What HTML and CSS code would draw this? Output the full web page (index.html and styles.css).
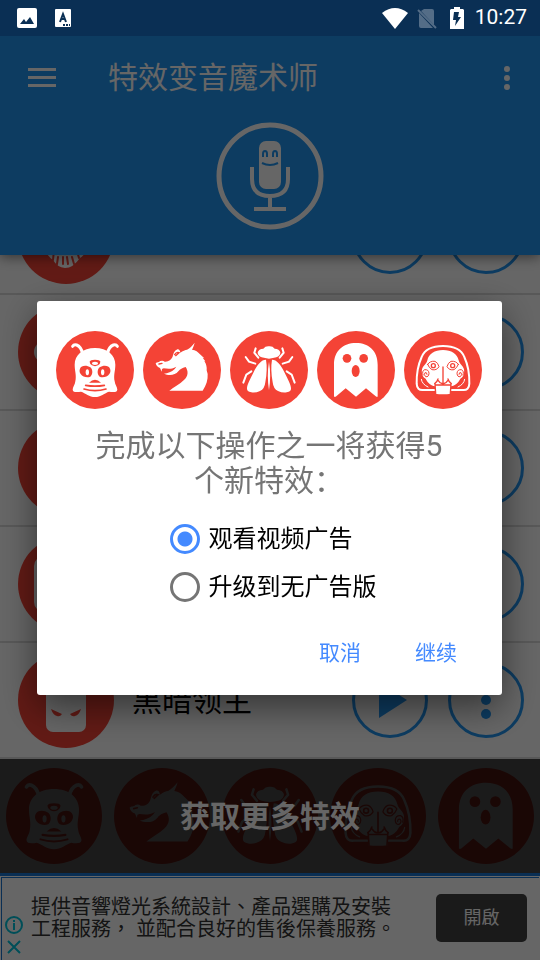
FILE: index.html
```html
<!doctype html>
<html lang="zh-CN">
<head>
  <meta charset="utf-8">
  <meta name="viewport" content="width=device-width, initial-scale=1">
  <title>特效变音魔术师</title>
  <link rel="stylesheet" href="styles.css">
</head>
<body>
  <!-- shared effect icons -->
  <svg class="sprite" aria-hidden="true">
    <symbol id="alien" viewBox="0 0 234 234">
      <circle class="r" cx="117" cy="117" r="117"/>
      <path class="ws" stroke-width="9" d="M50 46Q54 39 62 42Q75 47 80 68M184 46Q180 39 172 42Q159 47 154 68"/>
      <path class="w" d="M117 51C80 51 56 72 56 101C56 120 62 132 58 151C57 162 50 168 50 176C51 185 64 184 75 182C88 186 100 198 117 198C134 198 146 186 159 182C170 184 183 185 184 176C184 168 177 162 176 151C172 132 178 120 178 101C178 72 154 51 117 51Z"/>
      <path class="r" d="M101 92Q102 86 117 86Q132 86 133 92Q133 99 126 103Q117 108 108 103Q101 99 101 92Z"/>
      <ellipse class="w" cx="117" cy="97" rx="9" ry="5"/>
      <path class="r" d="M72 113C76 102 93 102 103 109C112 117 110 132 103 137C94 141 80 138 74 129C70 123 70 118 72 113ZM162 113C158 102 141 102 131 109C122 117 124 132 131 137C140 141 154 138 160 129C164 123 164 118 162 113Z"/>
      <ellipse class="w" cx="94" cy="124" rx="5" ry="9"/>
      <ellipse class="w" cx="140" cy="124" rx="5" ry="9"/>
      <path class="r" d="M99 155Q117 138 135 155Z"/>
      <path class="rs" stroke-width="5" d="M89 163Q117 168 145 163M84 174Q117 184 150 174"/>
    </symbol>
    <symbol id="dragon" viewBox="0 0 234 234">
      <circle class="r" cx="117" cy="117" r="117"/>
      <path class="w" d="M38 97C42 92 48 95 52 90Q60 87 65 92C77 93 85 86 88 79C91 71 92 60 101 56C107 53 111 57 112 65C119 60 127 56 132 56C141 51 147 45 155 35C153 43 151 48 147 56C158 57 165 63 171 70L184 82L179 80L187 91L184 91C190 99 192 109 191 118L194 129C195 147 190 162 179 179H79C93 168 111 159 122 148C137 135 136 120 128 108C117 111 112 114 106 121C96 134 76 134 63 128C74 127 86 123 95 114L100 107C84 116 73 113 62 112L57 114L56 122L51 111Q41 108 38 97Z"/>
      <path class="rs" stroke-width="4" d="M95 71Q100 62 108 65L98 74M48 99L57 97"/>
    </symbol>
    <symbol id="fly" viewBox="0 0 234 234">
      <circle class="r" cx="117" cy="117" r="117"/>
      <path class="w" d="M117 46Q128 45 134 53Q148 54 151 64Q151 75 139 79Q129 82 117 83Q105 82 95 79Q83 75 83 64Q86 54 100 53Q106 45 117 46Z"/>
      <path class="ws" stroke-width="6" d="M77 52L73 65L85 80M157 52L161 65L149 80M47 78L57 92L76 98M187 78L177 92L158 98M64 121L49 131L40 155M170 121L185 131L194 155"/>
      <path class="w" d="M108 86C94 86 82 100 70 125C61 143 51 161 51 172Q50 182 64 184Q77 186 90 180Q104 174 106 154Q113 115 108 86ZM126 86C140 86 152 100 164 125C173 143 183 161 183 172Q184 182 170 184Q157 186 144 180Q130 174 128 154Q121 115 126 86ZM117 92Q124 133 117 178Q110 133 117 92Z"/>
    </symbol>
    <symbol id="ghost" viewBox="0 0 234 234">
      <circle class="r" cx="117" cy="117" r="117"/>
      <path class="w" d="M51 101C51 60 78 36 117 36S182 60 182 101V197H178L147 172L117 197L86 172L56 197H51Z"/>
      <circle class="r" cx="90" cy="82" r="13"/>
      <circle class="r" cx="140" cy="82" r="13"/>
      <ellipse class="r" cx="116" cy="120" rx="12" ry="18"/>
    </symbol>
    <symbol id="puppet" viewBox="0 0 234 234">
      <circle class="r" cx="117" cy="117" r="117"/>
      <path class="ws" stroke-width="6" d="M91 177H58Q39 179 38 158Q37 113 53 78Q66 45 117 45Q168 45 181 78Q197 113 196 158Q195 179 176 177H143"/>
      <path class="w" d="M117 57C142 57 160 68 164 88C166 99 177 104 180 115C182 128 178 139 169 143C161 158 154 163 141 166L141 188Q117 191 93 188L93 166C80 163 73 158 65 143C56 139 52 128 54 115C57 104 68 99 70 88C74 68 92 57 117 57Z"/>
      <path class="ws" stroke-width="3" d="M52 145Q54 160 72 168M182 145Q180 160 162 168"/>
      <path class="rs" stroke-width="3" d="M71 100Q78 89 93 91Q102 95 105 107Q98 119 84 116Q75 111 71 100ZM163 100Q156 89 141 91Q132 95 129 107Q136 119 150 116Q159 111 163 100Z"/>
      <path class="rs" stroke-width="4" d="M117 108V156M92 158Q99 154 102 144M142 158Q135 154 132 144M103 149Q110 160 117 157Q124 160 131 149M93 158L95 188M141 158L139 188M96 162H138"/>
      <circle class="rs" stroke-width="4" cx="88" cy="104" r="6"/>
      <circle class="rs" stroke-width="4" cx="146" cy="104" r="6"/>
      <path class="rs" stroke-width="3" d="M57 132Q53 120 62 116Q74 115 75 127Q74 139 65 137Q58 131 63 125Q69 123 69 130M177 132Q181 120 172 116Q160 115 159 127Q160 139 169 137Q176 131 171 125Q165 123 165 130"/>
    </symbol>
    <symbol id="teeth" viewBox="0 0 96 96">
      <circle class="r" cx="48" cy="48" r="48"/>
      <path class="w" d="M24 40H72Q73 63 62 70Q55 80 47 80Q39 79 35 72Q23 64 24 40Z"/>
      <path class="rs" stroke-width="2" d="M36 62L35 72M40 69L39 76M45 69V76M49 69L50 76M54 69L56 76M59 63L61 70"/>
    </symbol>
    <symbol id="mask" viewBox="0 0 96 96">
      <circle class="r" cx="48" cy="48" r="48"/>
      <circle class="w" cx="27" cy="48" r="11"/>
      <circle class="w" cx="69" cy="48" r="11"/>
    </symbol>
    <symbol id="plain" viewBox="0 0 96 96">
      <circle class="r" cx="48" cy="48" r="48"/>
      <rect class="w" x="30" y="24" width="36" height="48" rx="8"/>
    </symbol>
    <symbol id="robot" viewBox="0 0 96 96">
      <circle class="r" cx="48" cy="48" r="48"/>
      <rect class="w" x="16" y="20" width="64" height="56" rx="10"/>
    </symbol>
    <symbol id="lord" viewBox="0 0 96 96">
      <circle class="r" cx="48" cy="48" r="48"/>
      <rect class="w" x="28" y="18" width="40" height="62" rx="7"/>
      <path class="r" d="M33 57L44 62Q42 65 39 64Q35 63 33 57ZM63 57L52 62Q54 65 57 64Q61 63 63 57Z"/>
    </symbol>
    <symbol id="play" viewBox="0 0 28 36"><path fill="#2196f3" d="M0 0L28 18L0 36Z"/></symbol>
    <symbol id="dots" viewBox="0 0 10 38">
      <g fill="#2196f3"><circle cx="5" cy="5" r="5"/><circle cx="5" cy="19" r="5"/><circle cx="5" cy="33" r="5"/></g>
    </symbol>
  </svg>

  <div class="status-bar">
    <svg width="20" height="20" viewBox="0 0 20 20"><rect width="20" height="20" rx="2" fill="#fff"/><path fill="#0a2f54" d="M3 16L7 11L9 14L13 9L17 16Z"/></svg>
    <svg class="status-lang" width="16" height="18" viewBox="0 0 16 18"><rect width="16" height="18" rx="1" fill="#fff"/><path fill="none" stroke="#0a2f54" stroke-width="2" d="M5 13L8 5L11 13M6 10H10"/><path fill="#0a2f54" d="M8 15H10V17H8ZM11 15H13V17H11ZM14 15H15V17H14Z"/></svg>
    <span class="spacer"></span>
    <svg width="26" height="21" viewBox="0 0 26 21"><path fill="#fff" d="M0 5Q13-5 26 5L13 21Z"/></svg>
    <svg class="status-sim" width="20" height="21" viewBox="0 0 20 21"><path fill="#546d87" d="M7 1H15Q17 1 17 3V17L4 3ZM2 5L16 20H4Q2 20 2 18Z"/><path stroke="#546d87" stroke-width="2" d="M1 2L19 20"/></svg>
    <svg class="status-battery" width="14" height="22" viewBox="0 0 14 22"><path fill="#fff" d="M4 0H10V2H13L14 3V22H0V3L1 2H4Z"/><path fill="#0a2f54" d="M4 5H9L8 10H11L5 19L6 13H3Z"/></svg>
    <span class="clock">10:27</span>
  </div>

  <header class="app-header">
    <div class="toolbar">
      <button class="icon-btn" aria-label="菜单"><svg width="28" height="19" viewBox="0 0 28 19"><path fill="#fff" d="M0 0H28V3H0ZM0 8H28V11H0ZM0 16H28V19H0Z"/></svg></button>
      <h1>特效变音魔术师</h1>
      <button class="icon-btn" aria-label="更多"><svg width="6" height="24" viewBox="0 0 6 24"><g fill="#fff"><circle cx="3" cy="3" r="3"/><circle cx="3" cy="12" r="3"/><circle cx="3" cy="21" r="3"/></g></svg></button>
    </div>
    <svg class="logo" width="108" height="108" viewBox="0 0 108 108">
      <circle cx="54" cy="54" r="51" fill="none" stroke="#fff" stroke-width="5"/>
      <rect x="43" y="19" width="22" height="48" rx="7" fill="#fff"/>
      <path fill="none" stroke="#2196f3" stroke-width="2" d="M47 35V32Q47 29 49 29T51 32V35M57 35V32Q57 29 59 29T61 32V35M46 41Q54 45 62 41"/>
      <path fill="none" stroke="#fff" stroke-width="4" d="M36 45V57Q36 74 54 74T72 57V45M54 74V87M38 87H70"/>
    </svg>
  </header>

  <main class="effects">
    <div class="effect">
      <svg class="avatar"><use href="#teeth"/></svg><span class="name"></span>
      <button class="round" aria-label="播放"><svg width="28" height="36"><use href="#play"/></svg></button>
      <button class="round" aria-label="选项"><svg width="10" height="38"><use href="#dots"/></svg></button>
    </div>
    <div class="effect">
      <svg class="avatar"><use href="#mask"/></svg><span class="name"></span>
      <button class="round" aria-label="播放"><svg width="28" height="36"><use href="#play"/></svg></button>
      <button class="round" aria-label="选项"><svg width="10" height="38"><use href="#dots"/></svg></button>
    </div>
    <div class="effect">
      <svg class="avatar"><use href="#plain"/></svg><span class="name"></span>
      <button class="round" aria-label="播放"><svg width="28" height="36"><use href="#play"/></svg></button>
      <button class="round" aria-label="选项"><svg width="10" height="38"><use href="#dots"/></svg></button>
    </div>
    <div class="effect">
      <svg class="avatar"><use href="#robot"/></svg><span class="name"></span>
      <button class="round" aria-label="播放"><svg width="28" height="36"><use href="#play"/></svg></button>
      <button class="round" aria-label="选项"><svg width="10" height="38"><use href="#dots"/></svg></button>
    </div>
    <div class="effect">
      <svg class="avatar"><use href="#lord"/></svg><span class="name">黑暗领主</span>
      <button class="round" aria-label="播放"><svg width="28" height="36"><use href="#play"/></svg></button>
      <button class="round" aria-label="选项"><svg width="10" height="38"><use href="#dots"/></svg></button>
    </div>
  </main>

  <button class="more-effects">
    <svg class="avatar"><use href="#alien"/></svg>
    <svg class="avatar"><use href="#dragon"/></svg>
    <svg class="avatar"><use href="#fly"/></svg>
    <svg class="avatar"><use href="#puppet"/></svg>
    <svg class="avatar"><use href="#ghost"/></svg>
    <span class="more-label">获取更多特效</span>
  </button>

  <aside class="ad" lang="zh-TW">
    <div class="ad-frame">
      <div class="ad-marks">
        <button aria-label="廣告資訊"><svg width="18" height="18" viewBox="0 0 18 18"><circle cx="9" cy="9" r="8" fill="none" stroke="#00c4dc" stroke-width="2"/><path fill="#00c4dc" d="M8 4H10V6H8ZM8 7H10V14H8Z"/></svg></button>
        <button aria-label="關閉廣告"><svg width="14" height="14" viewBox="0 0 14 14"><path stroke="#00c4dc" stroke-width="2" d="M1 1L13 13M13 1L1 13"/></svg></button>
      </div>
      <p>提供音響燈光系統設計、產品選購及安裝<br>工程服務， 並配合良好的售後保養服務。</p>
      <button class="ad-open">開啟</button>
    </div>
  </aside>

  <div class="scrim">
    <form class="dialog" role="dialog" aria-labelledby="dialog-title">
      <div class="dialog-icons">
        <svg><use href="#alien"/></svg>
        <svg><use href="#dragon"/></svg>
        <svg><use href="#fly"/></svg>
        <svg><use href="#ghost"/></svg>
        <svg><use href="#puppet"/></svg>
      </div>
      <h2 id="dialog-title">完成以下操作之一将获得5个新特效：</h2>
      <div class="options">
        <label><input type="radio" name="action" checked>观看视频广告</label>
        <label><input type="radio" name="action">升级到无广告版</label>
      </div>
      <div class="actions">
        <button type="button">取消</button>
        <button type="button">继续</button>
      </div>
    </form>
  </div>
</body>
</html>
```
FILE: styles.css
```css
* {
  box-sizing: border-box;
}
body {
  margin: 0;
  height: 100vh;
  display: flex;
  flex-direction: column;
  background: #fff;
  font-family: Roboto, "Noto Sans CJK SC", sans-serif;
  line-height: 1.1;
  overflow: hidden;
}
button {
  font: inherit;
  color: inherit;
  background: none;
  border: 0;
  padding: 0;
}
svg {
  display: block;
  flex: none;
}
.sprite {
  position: absolute;
  width: 0;
  height: 0;
}

/* icon colours */
.r { fill: #f44336; }
.w { fill: #fff; }
.rs { fill: none; stroke: #f44336; stroke-linecap: round; }
.ws { fill: none; stroke: #fff; stroke-linecap: round; }

.status-bar {
  flex: none;
  display: flex;
  align-items: center;
  height: 36px;
  padding: 0 13px 0 17px;
  background: #0a2f54;
  color: #fff;
  position: relative;
  z-index: 3;
}
.status-lang { margin-left: 18px; }
.spacer { flex: 1; }
.status-sim { margin-left: 9px; }
.status-battery { margin: 0 11px 0 13px; }
.clock {
  font-size: 21px;
  font-weight: 400;
}

.app-header {
  flex: none;
  height: 219px;
  background: #2196f3;
  color: #fff;
  box-shadow: 0 2px 12px rgba(0, 0, 0, .5);
  position: relative;
  z-index: 1;
}
.toolbar {
  display: flex;
  align-items: center;
  height: 83px;
  padding: 0 30px 0 28px;
}
.toolbar h1 {
  flex: 1;
  margin: 0 0 0 52px;
  font-size: 30px;
  font-weight: 400;
}
.logo { margin: 3px auto 0; }

.effects {
  flex: 1;
  min-height: 0;
  display: flex;
  flex-direction: column;
  justify-content: flex-end;
  overflow: hidden;
}
.effect {
  flex: none;
  display: flex;
  align-items: center;
  height: 116px;
  padding: 0 16px 0 18px;
  border-bottom: 2px solid #dcdcdc;
}
.avatar {
  width: 96px;
  height: 96px;
}
.name {
  flex: 1;
  margin-left: 18px;
  font-size: 30px;
}
.round {
  width: 76px;
  height: 76px;
  border: 3px solid #2196f3;
  border-radius: 50%;
  display: flex;
  align-items: center;
  justify-content: center;
}
.round + .round { margin-left: 20px; }
.round svg[width="28"] { margin-left: 5px; }

.more-effects {
  flex: none;
  display: flex;
  align-items: center;
  justify-content: center;
  gap: 12px;
  height: 114px;
  overflow: hidden;
  position: relative;
}
.more-label {
  position: absolute;
  inset: 0;
  display: flex;
  align-items: center;
  justify-content: center;
  background: rgba(0, 0, 0, .73);
  color: #fff;
  font-size: 30px;
  font-weight: 700;
}

.ad {
  flex: none;
  height: 87px;
  border-top: 3px solid #1976d2;
  padding: 1px 1px 0;
  color: #333;
  font-family: Roboto, "Noto Sans CJK TC", sans-serif;
}
.ad-frame {
  display: flex;
  align-items: center;
  height: 100%;
  padding: 0 12px 2px 3px;
  border-top: 1px solid #1976d2;
  border-left: 1px solid #1976d2;
}
.ad-marks {
  align-self: flex-end;
  display: flex;
  flex-direction: column;
  align-items: center;
  gap: 6px;
  width: 18px;
  padding-bottom: 4px;
}
.ad p {
  flex: 1;
  margin: 0 0 0 8px;
  font-size: 20px;
  line-height: 22px;
  white-space: nowrap;
}
.ad-open {
  width: 91px;
  height: 48px;
  border-radius: 5px;
  background: #424242;
  color: #fff;
  font-size: 18px;
}

.scrim {
  position: fixed;
  inset: 0;
  z-index: 2;
  display: flex;
  align-items: center;
  padding: 36px 38px 0 37px;
  background: rgba(0, 0, 0, .6);
}
.dialog {
  flex: 1;
  padding: 30px 20px 17px 19px;
  background: #fff;
  border-radius: 3px;
  box-shadow: 0 12px 36px rgba(0, 0, 0, .5);
}
.dialog-icons {
  display: flex;
  justify-content: center;
  gap: 9px;
}
.dialog-icons svg {
  width: 78px;
  height: 78px;
}
.dialog h2 {
  margin: 19px 28px 17px;
  color: #757575;
  font-size: 30px;
  font-weight: 400;
  line-height: 35px;
  text-align: center;
}
.options {
  width: max-content;
  margin: 0 auto;
  padding-left: 8px;
}
.options label {
  display: flex;
  align-items: center;
  gap: 9px;
  height: 48px;
  font-size: 24px;
}
.options input {
  appearance: none;
  width: 30px;
  height: 30px;
  margin: 0;
  border: 3px solid #757575;
  border-radius: 50%;
}
.options input:checked {
  border-color: #448aff;
  background: radial-gradient(circle, #448aff 7px, transparent 8px);
}
.actions {
  display: flex;
  justify-content: flex-end;
  gap: 6px;
  margin: 19px 1px 0 0;
}
.actions button {
  height: 48px;
  padding: 0 24px;
  color: #448aff;
  font-size: 21px;
}
```
